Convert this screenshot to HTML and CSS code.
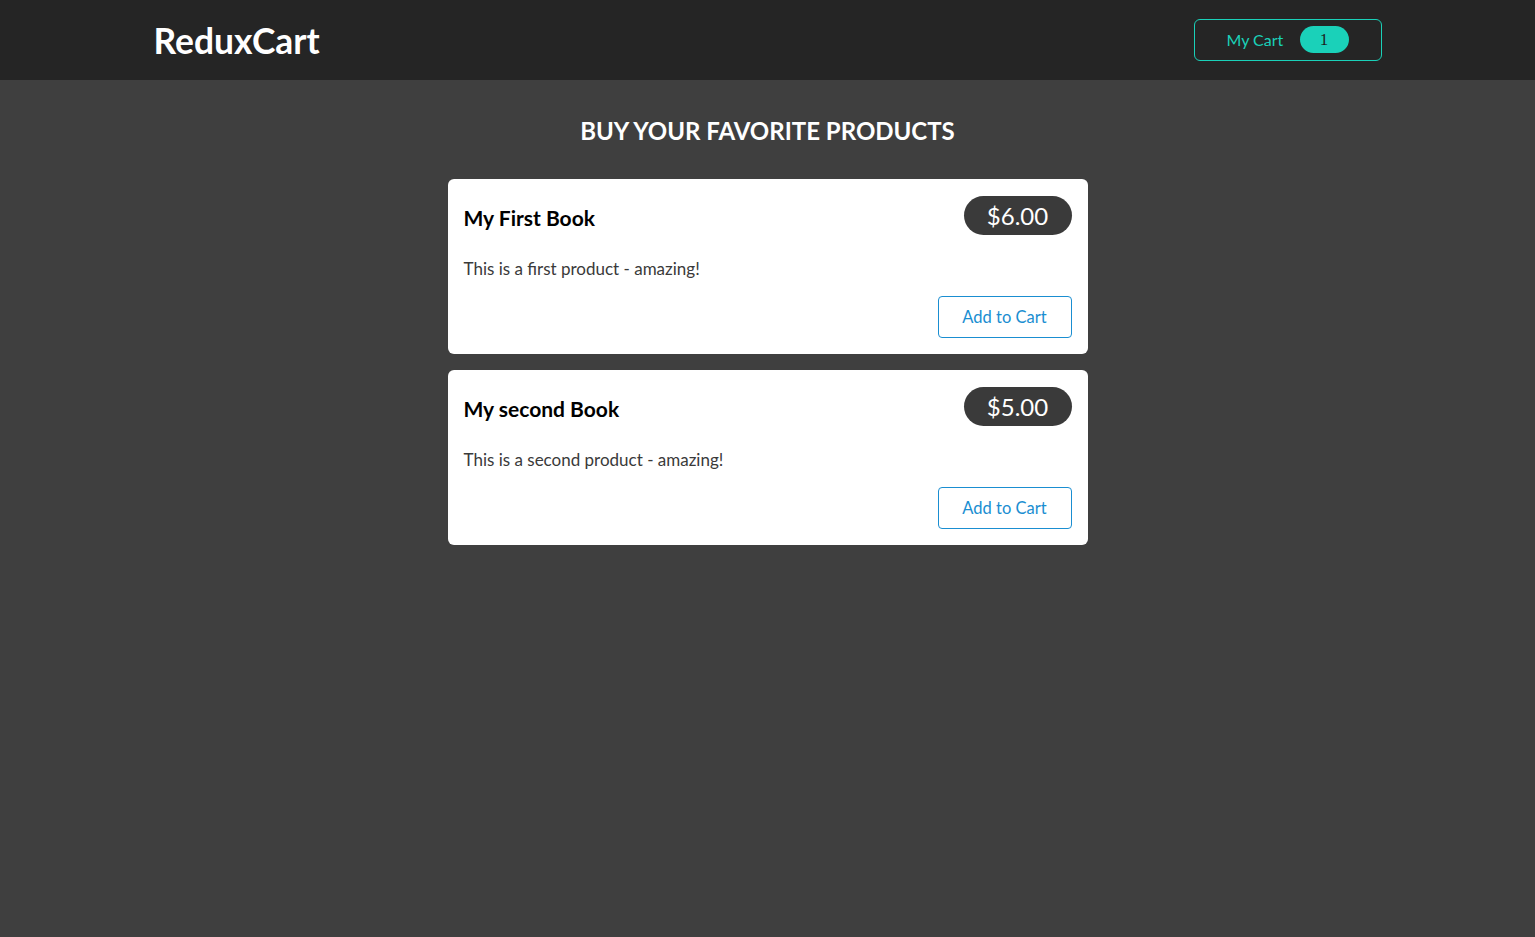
FILE: index.html
```html
<!DOCTYPE html>
<html lang="en">
<head>
<meta charset="utf-8">
<title>ReduxCart</title>
<link rel="stylesheet" href="styles.css">
</head>
<body>
<header class="header">
  <h1 class="logo">ReduxCart</h1>
  <nav>
    <button class="cart-button">
      <span>My Cart</span>
      <span class="badge">1</span>
    </button>
  </nav>
</header>
<main class="main">
  <section class="products">
    <h2 class="products-title">Buy your favorite products</h2>
    <ul class="product-list">
      <li class="card">
        <div class="item-head">
          <h3 class="item-title">My First Book</h3>
          <div class="price">$6.00</div>
        </div>
        <p class="item-desc">This is a first product - amazing!</p>
        <div class="actions">
          <button class="add-button">Add to Cart</button>
        </div>
      </li>
      <li class="card">
        <div class="item-head">
          <h3 class="item-title">My second Book</h3>
          <div class="price">$5.00</div>
        </div>
        <p class="item-desc">This is a second product - amazing!</p>
        <div class="actions">
          <button class="add-button">Add to Cart</button>
        </div>
      </li>
    </ul>
  </section>
</main>
</body>
</html>
```
FILE: styles.css
```css
* { box-sizing: border-box; }
html, body {
  margin: 0;
  height: 100%;
}
body {
  font-family: Lato, "Open Sans", sans-serif;
  font-size: 16px;
  background: #3f3f3f;
  display: flex;
  flex-direction: column;
}
.header {
  height: 80px;
  flex: none;
  background: #252525;
  padding: 0 10%;
  display: flex;
  justify-content: space-between;
  align-items: center;
}
.logo {
  margin: 0;
  color: #ffffff;
  font-size: 35.4px;
  font-weight: 700;
}
.cart-button {
  font-family: inherit;
  font-size: 16px;
  background: transparent;
  border: 1px solid #1ad1b9;
  color: #1ad1b9;
  border-radius: 6px;
  height: 42px;
  width: 188px;
  padding: 0 32px;
  margin-top: -1px;
  display: flex;
  align-items: center;
  justify-content: space-between;
  cursor: pointer;
}
.badge {
  background: #1ad1b9;
  color: #1d1d1d;
  border-radius: 30px;
  width: 49px;
  height: 27px;
  display: flex;
  align-items: center;
  justify-content: center;
  font-family: "Liberation Serif", serif;
  font-size: 17px;
}
.main {
  flex: 1;
  background: #3f3f3f;
}
.products {
  width: 640px;
  margin: 0 auto;
}
.products-title {
  color: #ffffff;
  text-align: center;
  text-transform: uppercase;
  font-size: 24px;
  font-weight: 700;
  margin: 36px 0 34px;
}
.product-list {
  list-style: none;
  margin: 0;
  padding: 0;
  display: flex;
  flex-direction: column;
  gap: 16px;
}
.card {
  background: #ffffff;
  border-radius: 6px;
  padding: 16px;
  height: 175px;
}
.item-head {
  display: flex;
  justify-content: space-between;
  align-items: center;
  height: 40px;
}
.item-title {
  margin: 4px 0 0;
  font-size: 21px;
  font-weight: 700;
  color: #000000;
}
.price {
  background: #3a3a3a;
  color: #ffffff;
  border-radius: 30px;
  width: 108px;
  height: 39px;
  display: flex;
  align-items: center;
  justify-content: center;
  font-size: 24px;
}
.item-desc {
  margin: 22px 0 0;
  color: #3a3a3a;
  font-size: 17px;
  height: 24px;
  line-height: 24px;
}
.actions {
  display: flex;
  justify-content: flex-end;
  margin-top: 15px;
}
.add-button {
  font-family: inherit;
  font-size: 16.5px;
  background: transparent;
  border: 1px solid #1a8ed1;
  color: #1a8ed1;
  border-radius: 4px;
  width: 134px;
  height: 42px;
  padding: 0;
  cursor: pointer;
}
```
